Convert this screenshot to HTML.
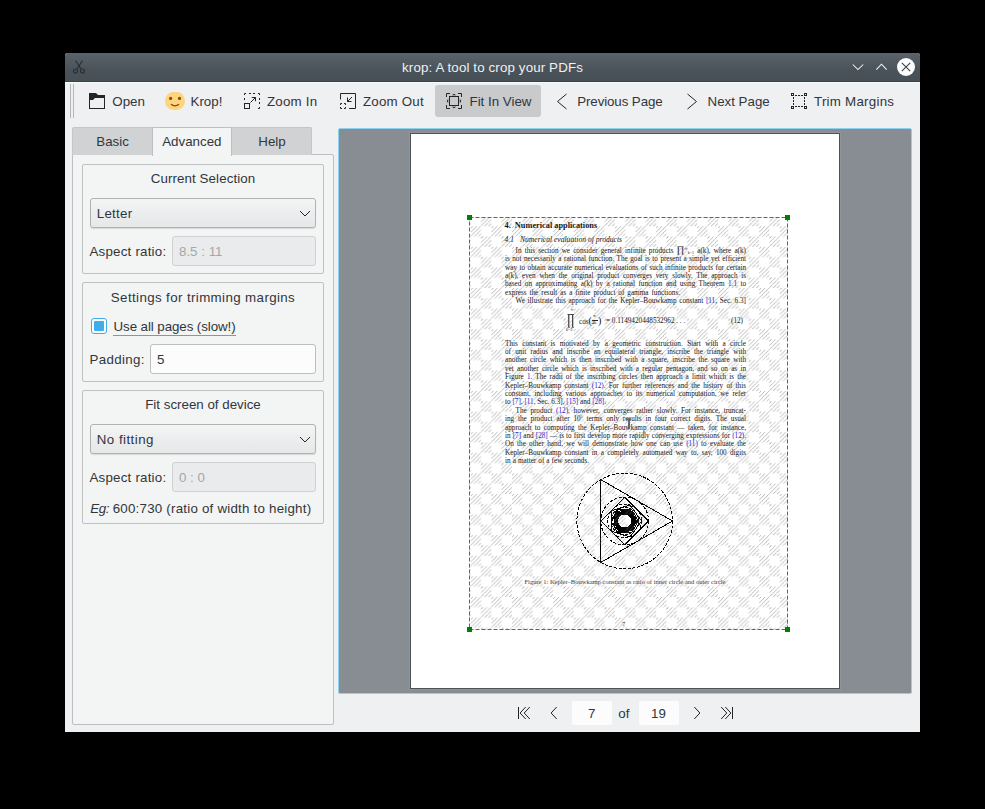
<!DOCTYPE html><html><head><meta charset="utf-8"><style>
*{margin:0;padding:0;box-sizing:border-box}
html,body{width:985px;height:809px;overflow:hidden;background:#000}
body{position:relative;font-family:"Liberation Sans", sans-serif}
.a{position:absolute}
.t{position:absolute;white-space:nowrap;font-family:"Liberation Sans", sans-serif}
.pl sup,.pl sub{line-height:0}
.pl{position:absolute;white-space:nowrap;font-family:"Liberation Serif", serif;color:#111;text-align:justify;text-align-last:justify}
svg{position:absolute;overflow:visible}
</style></head><body>
<div class="a" style="left:65px;top:53px;width:855px;height:679px;background:#eff0f1;border-radius:3px 3px 0 0"></div>
<div class="a" style="left:65px;top:53px;width:855px;height:29px;border-radius:3px 3px 0 0;background:linear-gradient(#5a636b,#4b535a 60%,#475057);border-bottom:1px solid #3b4249"></div>
<div class="a" style="left:65px;top:82px;width:855px;height:1px;background:#f8f9f9"></div>
<svg style="left:72px;top:59px" width="16" height="16" viewBox="0 0 16 16"><g fill="none" stroke="#2a2e32" stroke-width="1.1"><path d="M3.5 1.5 L9 10 M10.5 1.5 L5 10"/><circle cx="3.5" cy="12" r="2"/><circle cx="10.5" cy="12" r="2"/></g></svg>
<div class="t" style="left:292.5px;width:400px;text-align:center;top:59.98px;font-size:13.333px;line-height:16px;color:#eff0f1;letter-spacing:0.13px">krop: A tool to crop your PDFs</div>
<svg style="left:850px;top:60px" width="70" height="16" viewBox="0 0 70 16"><g fill="none" stroke="#f4f5f6" stroke-width="1.05"><path d="M2.8 4.5 L8 9.6 L13.2 4.5"/><path d="M26.3 9.6 L31.5 4.2 L36.7 9.6"/></g><circle cx="56" cy="7" r="9" fill="#fcfcfc"/><path d="M51.8 2.8 L60.2 11.2 M60.2 2.8 L51.8 11.2" stroke="#3c4349" stroke-width="1.1"/></svg>
<div class="a" style="left:70px;top:84px;width:1px;height:34px;background:#b4b6b8"></div>
<div class="a" style="left:73px;top:84px;width:1px;height:34px;background:#b4b6b8"></div>
<div class="a" style="left:435px;top:85px;width:106px;height:32px;background:#c9cacb;border-radius:3px"></div>
<svg style="left:89px;top:93px" width="16" height="16" viewBox="0 0 16 16"><path fill="#232629" fill-rule="evenodd" d="M0 0 H7 L9 2 H16 V16 H0 Z M1 7 H4 L6 5 H15 V15 H1 Z"/></svg>
<svg style="left:165px;top:92px" width="20" height="18" viewBox="0 0 20 18"><rect x="0" y="0" width="20" height="18" rx="8.5" ry="8.5" fill="#fdd57f"/><circle cx="5.6" cy="6.4" r="1.6" fill="#8b4a0c"/><circle cx="14.5" cy="6.4" r="1.6" fill="#8b4a0c"/><path d="M6 12.3 Q10 15.6 14 12.3" fill="none" stroke="#8b4a0c" stroke-width="1.3"/></svg>
<svg style="left:244px;top:93px" width="16" height="16" viewBox="0 0 16 16"><g fill="none" stroke="#232629" stroke-width="1"><rect x="0.5" y="10.5" width="5" height="5"/><path d="M0.5 2 V0.5 H2 M5 0.5 H7 M9 0.5 H11 M14 0.5 H15.5 V2 M0.5 5 V7 M15.5 5 V7 M15.5 9 V11 M15.5 14 V15.5 H14 M6.5 9.5 L11.5 4.5 M7.8 4.5 H11.5 V8.2"/></g></svg>
<svg style="left:340px;top:93px" width="16" height="16" viewBox="0 0 16 16"><g fill="none" stroke="#232629" stroke-width="1"><path d="M0.5 6.5 V0.5 H15.5 V15.5 H9"/><path d="M0.5 12 V10.5 H2 M4 10.5 H5.5 V12 M0.5 14 V15.5 H2 M4 15.5 H5.5 V14"/><path d="M12 4 L7.5 8.5 M7.5 4.5 V8.5 H11.5"/></g></svg>
<svg style="left:446px;top:93px" width="16" height="16" viewBox="0 0 16 16"><g fill="none" stroke="#232629" stroke-width="1"><path d="M0.5 4 V0.5 H4 M12 0.5 H15.5 V4 M0.5 12 V15.5 H4 M12 15.5 H15.5 V12"/><rect x="3.5" y="3.5" width="9" height="9"/></g><g fill="#232629"><path d="M5.8 2.2 L8 0.7 L10.2 2.2 Z M5.8 13.8 L8 15.3 L10.2 13.8 Z M2.2 5.8 L0.7 8 L2.2 10.2 Z M13.8 5.8 L15.3 8 L13.8 10.2 Z"/></g></svg>
<svg style="left:556px;top:93px" width="12" height="17" viewBox="0 0 12 17"><path d="M10.5 1 L1.5 8.5 L10.5 16" fill="none" stroke="#232629" stroke-width="1"/></svg>
<svg style="left:686px;top:93px" width="12" height="17" viewBox="0 0 12 17"><path d="M1.5 1 L10.5 8.5 L1.5 16" fill="none" stroke="#232629" stroke-width="1"/></svg>
<svg style="left:791px;top:93px" width="16" height="16" viewBox="0 0 16 16"><g fill="none" stroke="#232629" stroke-width="1"><rect x="0.5" y="0.5" width="2" height="2"/><rect x="13.5" y="0.5" width="2" height="2"/><rect x="0.5" y="13.5" width="2" height="2"/><rect x="13.5" y="13.5" width="2" height="2"/><path d="M4 2.5 H6 M7 2.5 H9 M10 2.5 H12 M4 13.5 H6 M7 13.5 H9 M10 13.5 H12 M2.5 4 V6 M2.5 7 V9 M2.5 10 V12 M13.5 4 V6 M13.5 7 V9 M13.5 10 V12"/></g></svg>
<div class="t" style="left:112.3px;top:93.68px;font-size:13.333px;line-height:16px;color:#31363b;">Open</div>
<div class="t" style="left:190.5px;top:93.68px;font-size:13.333px;line-height:16px;color:#31363b;">Krop!</div>
<div class="t" style="left:267px;top:93.68px;font-size:13.333px;line-height:16px;color:#31363b;letter-spacing:0.2px">Zoom In</div>
<div class="t" style="left:363px;top:93.68px;font-size:13.333px;line-height:16px;color:#31363b;letter-spacing:0.2px">Zoom Out</div>
<div class="t" style="left:469.5px;top:93.68px;font-size:13.333px;line-height:16px;color:#31363b;">Fit In View</div>
<div class="t" style="left:577.2px;top:93.68px;font-size:13.333px;line-height:16px;color:#31363b;letter-spacing:-0.1px">Previous Page</div>
<div class="t" style="left:707.5px;top:93.68px;font-size:13.333px;line-height:16px;color:#31363b;">Next Page</div>
<div class="t" style="left:814px;top:93.68px;font-size:13.333px;line-height:16px;color:#31363b;letter-spacing:0.25px">Trim Margins</div>
<div class="a" style="left:72px;top:154px;width:262px;height:571px;background:#f3f4f4;border:1px solid #bdbfc0;border-radius:0 2px 2px 2px"></div>
<div class="a" style="left:72px;top:127px;width:81px;height:28px;background:#d1d2d4;border:1px solid #c4c6c7;border-bottom:none;border-radius:2px 0 0 0"></div>
<div class="a" style="left:231px;top:127px;width:81px;height:28px;background:#d1d2d4;border:1px solid #c4c6c7;border-bottom:none;border-radius:0 2px 0 0"></div>
<div class="a" style="left:152px;top:127px;width:80px;height:29px;background:#f3f4f4;border:1px solid #bdbfc0;border-bottom:none;border-radius:2px 2px 0 0"></div>
<div class="t" style="left:96.3px;top:133.68px;font-size:13.333px;line-height:16px;color:#31363b;">Basic</div>
<div class="t" style="left:162.2px;top:133.68px;font-size:13.333px;line-height:16px;color:#31363b;">Advanced</div>
<div class="t" style="left:258.3px;top:133.68px;font-size:13.333px;line-height:16px;color:#31363b;">Help</div>
<div class="a" style="left:82px;top:164px;width:242px;height:110px;background:#f3f4f4;border:1px solid #bfc1c2;border-radius:2px"></div>
<div class="t" style="left:3px;width:400px;text-align:center;top:171.08px;font-size:13.333px;line-height:16px;color:#31363b;letter-spacing:0.1px">Current Selection</div>
<div class="a" style="left:90px;top:198px;width:226px;height:30px;background:linear-gradient(#f3f4f4,#e6e7e8);border:1px solid #b0b2b4;border-radius:3px;box-shadow:0 1px 1px rgba(0,0,0,0.12)"></div>
<svg style="left:299px;top:210px" width="12" height="7" viewBox="0 0 12 7"><path d="M1 1 L6 6 L11 1" fill="none" stroke="#232629" stroke-width="1"/></svg>
<div class="t" style="left:96.8px;top:205.98px;font-size:13.333px;line-height:16px;color:#31363b;letter-spacing:0.25px">Letter</div>
<div class="t" style="left:89.4px;top:244.48px;font-size:13.333px;line-height:16px;color:#31363b;letter-spacing:0.22px">Aspect ratio:</div>
<div class="a" style="left:172px;top:236px;width:144px;height:30px;background:#eaebec;border:1px solid #cfd1d2;border-radius:3px"></div>
<div class="t" style="left:179px;top:244.28px;font-size:13.333px;line-height:16px;color:#a5a7a9;">8.5 : 11</div>
<div class="a" style="left:82px;top:282px;width:242px;height:100px;background:#f3f4f4;border:1px solid #bfc1c2;border-radius:2px"></div>
<div class="t" style="left:3px;width:400px;text-align:center;top:289.58px;font-size:13.333px;line-height:16px;color:#31363b;letter-spacing:0.38px">Settings for trimming margins</div>
<div class="a" style="left:91px;top:318px;width:16px;height:16px;background:#fcfcfc;border:1px solid #3daee9;border-radius:3px"></div>
<div class="a" style="left:94px;top:321px;width:10px;height:10px;background:#3daee9;border-radius:1px"></div>
<div class="t" style="left:113.5px;top:318.78px;font-size:13.333px;line-height:16px;color:#31363b;letter-spacing:-0.08px">Use all pages (slow!)</div>
<div class="a" style="left:113px;top:335px;width:123px;height:1px;background:#3daee9"></div>
<div class="t" style="left:89.4px;top:351.78px;font-size:13.333px;line-height:16px;color:#31363b;letter-spacing:0.35px">Padding:</div>
<div class="a" style="left:150px;top:344px;width:166px;height:30px;background:#fcfcfc;border:1px solid #bcbec0;border-radius:3px"></div>
<div class="t" style="left:157px;top:352.28px;font-size:13.333px;line-height:16px;color:#31363b;">5</div>
<div class="a" style="left:82px;top:390px;width:242px;height:134px;background:#f3f4f4;border:1px solid #bfc1c2;border-radius:2px"></div>
<div class="t" style="left:3px;width:400px;text-align:center;top:396.68px;font-size:13.333px;line-height:16px;color:#31363b;">Fit screen of device</div>
<div class="a" style="left:90px;top:424px;width:226px;height:30px;background:linear-gradient(#f3f4f4,#e6e7e8);border:1px solid #b0b2b4;border-radius:3px;box-shadow:0 1px 1px rgba(0,0,0,0.12)"></div>
<svg style="left:299px;top:436px" width="12" height="7" viewBox="0 0 12 7"><path d="M1 1 L6 6 L11 1" fill="none" stroke="#232629" stroke-width="1"/></svg>
<div class="t" style="left:96.8px;top:431.98px;font-size:13.333px;line-height:16px;color:#31363b;letter-spacing:0.45px">No fitting</div>
<div class="t" style="left:89.4px;top:470.28px;font-size:13.333px;line-height:16px;color:#31363b;letter-spacing:0.22px">Aspect ratio:</div>
<div class="a" style="left:172px;top:462px;width:144px;height:30px;background:#eaebec;border:1px solid #cfd1d2;border-radius:3px"></div>
<div class="t" style="left:179px;top:470.28px;font-size:13.333px;line-height:16px;color:#a5a7a9;">0 : 0</div>
<div class="t" style="left:90.2px;top:501.18px;font-size:13.333px;line-height:16px;color:#31363b;"><i style="letter-spacing:-0.4px">Eg:</i> <span style="letter-spacing:0.22px">600:730 (ratio of width to height)</span></div>
<div class="a" style="left:338px;top:128px;width:574px;height:566px;background:#888c93;border:1px solid #8fd0ee;border-radius:2px"></div>
<div class="a" style="left:410px;top:133px;width:430px;height:556px;background:#fff;border:1px solid #4d5257;box-shadow:0 0 0 1px rgba(255,255,255,0.08)"></div>
<div class="pl" style="left:504.5px;top:221.45px;width:90px;font-size:8.3px;line-height:9.54px;"><b>4.&nbsp;&nbsp;Numerical applications</b></div>
<div class="pl" style="left:504.5px;top:236.28px;width:9px;font-size:7.6px;line-height:8.73px;"><i>4.1</i></div>
<div class="pl" style="left:520px;top:236.28px;width:102px;font-size:7.6px;line-height:8.73px;"><i>Numerical evaluation of products</i></div>
<div class="pl" style="left:515.5px;top:246.83px;width:230.5px;font-size:7.2px;line-height:8.27px;">In this section we consider general infinite products <span style='font-size:9.5px;line-height:0'>∏</span><span style='font-size:4.5px;line-height:0;position:relative;top:-3px'>∞</span><span style='font-size:4px;line-height:0;position:relative;top:1.5px'>k=1</span> a(k), where a(k)</div>
<div class="pl" style="left:505px;top:255.18px;width:241px;font-size:7.2px;line-height:8.27px;">is not necessarily a rational function. The goal is to present a simple yet efficient</div>
<div class="pl" style="left:505px;top:263.53px;width:241px;font-size:7.2px;line-height:8.27px;">way to obtain accurate numerical evaluations of such infinite products for certain</div>
<div class="pl" style="left:505px;top:271.88px;width:241px;font-size:7.2px;line-height:8.27px;">a(k), even when the original product converges very slowly. The approach is</div>
<div class="pl" style="left:505px;top:280.23px;width:241px;font-size:7.2px;line-height:8.27px;">based on approximating a(k) by a rational function and using Theorem <span style="color:#1a1acc">1.1</span> to</div>
<div class="pl" style="left:505px;top:288.58px;width:175px;font-size:7.2px;line-height:8.27px;">express the result as a finite product of gamma functions.</div>
<div class="pl" style="left:515.5px;top:296.93px;width:230.5px;font-size:7.2px;line-height:8.27px;">We illustrate this approach for the Kepler–Bouwkamp constant <span style="color:#1a1acc">[11</span>, Sec. 6.3]</div>
<svg style="left:566px;top:312px" width="20" height="20" viewBox="0 0 20 20"><g fill="#111"><path d="M1.5 2.2 H8 V2.9 H7.2 V15 H8 V15.6 H5.5 V15 H6.2 V2.9 H3.3 V15 H4.1 V15.6 H1.5 V15 H2.3 V2.9 H1.5 Z"/></g></svg>
<div class="pl" style="left:570px;top:308px;font-size:4px;line-height:4px;text-align:center;width:4px;text-align-last:center">∞</div>
<div class="pl" style="left:566px;top:327.5px;font-size:4px;line-height:4px;width:10px">k=3</div>
<div class="pl" style="left:579px;top:316.5px;font-size:7.2px;line-height:8px;text-align-last:auto">cos<span style="font-size:10px">(</span></div>
<div class="pl" style="left:593px;top:313px;font-size:5px;line-height:5px;text-align-last:auto">π</div>
<div class="a" style="left:591.5px;top:319.5px;width:6px;height:0.6px;background:#222"></div>
<div class="pl" style="left:591.5px;top:320px;font-size:5px;line-height:5px;text-align-last:auto">4k</div>
<div class="pl" style="left:598px;top:316.5px;font-size:10px;line-height:8px;text-align-last:auto">)</div>
<div class="pl" style="left:606px;top:316.73px;width:74px;font-size:7.2px;line-height:8.27px;">= 0.1149420448532962 . . .</div>
<div class="pl" style="left:731px;top:316.73px;width:15px;font-size:7.2px;line-height:8.27px;">(12)</div>
<div class="pl" style="left:505px;top:339.63px;width:241px;font-size:7.2px;line-height:8.27px;">This constant is motivated by a geometric construction. Start with a circle</div>
<div class="pl" style="left:505px;top:348.03px;width:241px;font-size:7.2px;line-height:8.27px;">of unit radius and inscribe an equilateral triangle, inscribe the triangle with</div>
<div class="pl" style="left:505px;top:356.43px;width:241px;font-size:7.2px;line-height:8.27px;">another circle which is then inscribed with a square, inscribe the square with</div>
<div class="pl" style="left:505px;top:364.83px;width:241px;font-size:7.2px;line-height:8.27px;">yet another circle which is inscribed with a regular pentagon, and so on as in</div>
<div class="pl" style="left:505px;top:373.23px;width:241px;font-size:7.2px;line-height:8.27px;">Figure <span style="color:#1a1acc">1</span>. The radii of the inscribing circles then approach a limit which is the</div>
<div class="pl" style="left:505px;top:381.63px;width:241px;font-size:7.2px;line-height:8.27px;">Kepler–Bouwkamp constant <span style="color:#1a1acc">(12)</span>. For further references and the history of this</div>
<div class="pl" style="left:505px;top:390.03px;width:241px;font-size:7.2px;line-height:8.27px;">constant, including various approaches to its numerical computation, we refer</div>
<div class="pl" style="left:505px;top:398.43px;width:101px;font-size:7.2px;line-height:8.27px;">to <span style="color:#1a1acc">[7]</span>, <span style="color:#1a1acc">[11</span>, Sec. 6.3], <span style="color:#1a1acc">[15]</span> and <span style="color:#1a1acc">[28]</span>.</div>
<div class="pl" style="left:515.5px;top:406.93px;width:230.5px;font-size:7.2px;line-height:8.27px;">The product <span style="color:#1a1acc">(12)</span>, however, converges rather slowly. For instance, truncat-</div>
<div class="pl" style="left:505px;top:415.30px;width:241px;font-size:7.2px;line-height:8.27px;">ing the product after 10<sup style='font-size:4px'>5</sup> terms only results in four correct digits. The usual</div>
<div class="pl" style="left:505px;top:423.67px;width:241px;font-size:7.2px;line-height:8.27px;">approach to computing the Kepler–Bouwkamp constant — taken, for instance,</div>
<div class="pl" style="left:505px;top:432.04px;width:241px;font-size:7.2px;line-height:8.27px;">in <span style="color:#1a1acc">[7]</span> and <span style="color:#1a1acc">[28]</span> — is to first develop more rapidly converging expressions for <span style="color:#1a1acc">(12)</span>.</div>
<div class="pl" style="left:505px;top:440.41px;width:241px;font-size:7.2px;line-height:8.27px;">On the other hand, we will demonstrate how one can use <span style="color:#1a1acc">(11)</span> to evaluate the</div>
<div class="pl" style="left:505px;top:448.78px;width:241px;font-size:7.2px;line-height:8.27px;">Kepler–Bouwkamp constant in a completely automated way to, say, 100 digits</div>
<div class="pl" style="left:505px;top:457.15px;width:84px;font-size:7.2px;line-height:8.27px;">in a matter of a few seconds.</div>
<svg style="left:0;top:0" width="985" height="809" viewBox="0 0 985 809"><g fill="none" stroke="#000" shape-rendering="crispEdges"><circle cx="624.7" cy="521.0" r="47.80" stroke-width="1" stroke-dasharray="3 1.6"/><polygon points="672.50,521.00 600.80,562.40 600.80,479.60" stroke-width="1"/><circle cx="624.7" cy="521.0" r="23.90" stroke-width="1" stroke-dasharray="3 1.6"/><polygon points="648.60,521.00 624.70,544.90 600.80,521.00 624.70,497.10" stroke-width="1"/><circle cx="624.7" cy="521.0" r="16.90" stroke-width="1" stroke-dasharray="3 1.6"/><polygon points="641.60,521.00 629.92,537.07 611.03,530.93 611.03,511.07 629.92,504.93" stroke-width="1"/><circle cx="624.7" cy="521.0" r="13.67" stroke-width="1" stroke-dasharray="3 1.6"/><polygon points="638.37,521.00 631.54,532.84 617.86,532.84 611.03,521.00 617.86,509.16 631.54,509.16" stroke-width="1"/><circle cx="624.7" cy="521.0" r="11.84" stroke-width="1" stroke-dasharray="3 1.6"/><polygon points="636.54,521.00 632.08,530.26 622.07,532.54 614.03,526.14 614.03,515.86 622.07,509.46 632.08,511.74" stroke-width="1"/><circle cx="624.7" cy="521.0" r="10.67" stroke-width="1" stroke-dasharray="3 1.6"/><polygon points="635.37,521.00 632.24,528.54 624.70,531.67 617.16,528.54 614.03,521.00 617.16,513.46 624.70,510.33 632.24,513.46" stroke-width="1"/><circle cx="624.7" cy="521.0" r="9.86" stroke-width="1" stroke-dasharray="3 1.6"/><polygon points="634.56,521.00 632.25,527.34 626.41,530.71 619.77,529.54 615.44,524.37 615.44,517.63 619.77,512.46 626.41,511.29 632.25,514.66" stroke-width="1"/><circle cx="624.7" cy="521.0" r="9.26" stroke-width="1" stroke-dasharray="3 1.6"/><polygon points="633.96,521.00 632.19,526.44 627.56,529.81 621.84,529.81 617.21,526.44 615.44,521.00 617.21,515.56 621.84,512.19 627.56,512.19 632.19,515.56" stroke-width="1"/><circle cx="624.7" cy="521.0" r="8.81" stroke-width="1" stroke-dasharray="3 1.6"/><polygon points="633.51,521.00 632.11,525.76 628.36,529.01 623.45,529.72 618.93,527.66 616.25,523.48 616.25,518.52 618.93,514.34 623.45,512.28 628.36,512.99 632.11,516.24" stroke-width="1"/><circle cx="624.7" cy="521.0" r="8.45" stroke-width="1" stroke-dasharray="3 1.6"/><polygon points="633.15,521.00 632.02,525.23 628.93,528.32 624.70,529.45 620.47,528.32 617.38,525.23 616.25,521.00 617.38,516.77 620.47,513.68 624.70,512.55 628.93,513.68 632.02,516.77" stroke-width="1"/><circle cx="624.7" cy="521.0" r="8.16" stroke-width="1" stroke-dasharray="3 1.6"/><polygon points="632.86,521.00 631.93,524.79 629.34,527.72 625.68,529.10 621.81,528.63 618.59,526.41 616.77,522.95 616.77,519.05 618.59,515.59 621.81,513.37 625.68,512.90 629.34,514.28 631.93,517.21" stroke-width="1"/><circle cx="624.7" cy="521.0" r="7.93" stroke-width="1" stroke-dasharray="3 1.6"/><polygon points="632.63,521.00 631.84,524.44 629.64,527.20 626.46,528.73 622.94,528.73 619.76,527.20 617.56,524.44 616.77,521.00 617.56,517.56 619.76,514.80 622.94,513.27 626.46,513.27 629.64,514.80 631.84,517.56" stroke-width="1"/><circle cx="624.7" cy="521.0" r="7.73" stroke-width="1" stroke-dasharray="3 1.6"/><polygon points="632.43,521.00 631.76,524.14 629.87,526.74 627.09,528.35 623.89,528.69 620.84,527.69 618.45,525.54 617.14,522.61 617.14,519.39 618.45,516.46 620.84,514.31 623.89,513.31 627.09,513.65 629.87,515.26 631.76,517.86" stroke-width="1"/><circle cx="624.7" cy="521.0" r="7.56" stroke-width="1" stroke-dasharray="3 1.6"/><polygon points="632.26,521.00 631.68,523.89 630.04,526.34 627.59,527.98 624.70,528.56 621.81,527.98 619.36,526.34 617.72,523.89 617.14,521.00 617.72,518.11 619.36,515.66 621.81,514.02 624.70,513.44 627.59,514.02 630.04,515.66 631.68,518.11" stroke-width="1"/><circle cx="624.7" cy="521.0" r="7.41" stroke-width="1" stroke-dasharray="3 1.6"/><polygon points="632.11,521.00 631.61,523.68 630.18,525.99 628.00,527.64 625.38,528.38 622.67,528.13 620.23,526.92 618.40,524.90 617.41,522.36 617.41,519.64 618.40,517.10 620.23,515.08 622.67,513.87 625.38,513.62 628.00,514.36 630.18,516.01 631.61,518.32" stroke-width="1"/><circle cx="624.7" cy="521.0" r="7.29" stroke-width="1" stroke-dasharray="3 1.6"/><polygon points="631.99,521.00 631.55,523.49 630.28,525.68 628.34,527.31 625.97,528.18 623.43,528.18 621.06,527.31 619.12,525.68 617.85,523.49 617.41,521.00 617.85,518.51 619.12,516.32 621.06,514.69 623.43,513.82 625.97,513.82 628.34,514.69 630.28,516.32 631.55,518.51" stroke-width="1"/><circle cx="624.7" cy="521.0" r="7.18" stroke-width="1" stroke-dasharray="3 1.6"/><polygon points="631.88,521.00 631.49,523.33 630.36,525.41 628.63,527.01 626.46,527.96 624.11,528.15 621.82,527.57 619.84,526.28 618.39,524.42 617.62,522.18 617.62,519.82 618.39,517.58 619.84,515.72 621.82,514.43 624.11,513.85 626.46,514.04 628.63,514.99 630.36,516.59 631.49,518.67" stroke-width="1"/><circle cx="624.7" cy="521.0" r="7.08" stroke-width="1" stroke-dasharray="3 1.6"/><polygon points="631.78,521.00 631.43,523.19 630.43,525.16 628.86,526.73 626.89,527.73 624.70,528.08 622.51,527.73 620.54,526.73 618.97,525.16 617.97,523.19 617.62,521.00 617.97,518.81 618.97,516.84 620.54,515.27 622.51,514.27 624.70,513.92 626.89,514.27 628.86,515.27 630.43,516.84 631.43,518.81" stroke-width="1"/><circle cx="624.7" cy="521.0" r="6.99" stroke-width="1"/></g></svg>
<div class="pl" style="left:524.5px;top:578.06px;width:201px;font-size:6.5px;line-height:7.47px;color:#3a3a3a">Figure 1: Kepler–Bouwkamp constant as ratio of inner circle and outer circle</div>
<div class="pl" style="left:622px;top:619.97px;width:4px;font-size:6.6px;line-height:7.58px;color:#333">7</div>
<svg style="left:469px;top:217px" width="319" height="413" viewBox="0 0 319 413">
<defs><clipPath id="cc"><rect x="0" y="0" width="10.3" height="10.3"/><rect x="10.3" y="10.3" width="10.3" height="10.3"/></clipPath>
<pattern id="h" patternUnits="userSpaceOnUse" width="20.6" height="20.6" x="1.75" y="9.2">
<g clip-path="url(#cc)" stroke="#7e7e7e" stroke-width="0.9" fill="none" stroke-dasharray="0.9 0.514"><path d="M-10.00 12.00 L3.00 -1.00"/><path d="M-6.00 12.00 L7.00 -1.00"/><path d="M-2.00 12.00 L11.00 -1.00"/><path d="M2.00 12.00 L15.00 -1.00"/><path d="M6.00 12.00 L19.00 -1.00"/><path d="M10.00 12.00 L23.00 -1.00"/><path d="M0.30 22.30 L13.30 9.30"/><path d="M4.30 22.30 L17.30 9.30"/><path d="M8.30 22.30 L21.30 9.30"/><path d="M12.30 22.30 L25.30 9.30"/><path d="M16.30 22.30 L29.30 9.30"/><path d="M20.30 22.30 L33.30 9.30"/></g></pattern></defs>
<rect x="0" y="0" width="319" height="413" fill="url(#h)"/>
<rect x="0.5" y="0.5" width="318" height="412" fill="none" stroke="#636363" stroke-width="1" stroke-dasharray="4 2"/>
</svg>
<div class="a" style="left:467px;top:215px;width:5px;height:5px;background:#008000"></div>
<div class="a" style="left:785px;top:215px;width:5px;height:5px;background:#008000"></div>
<div class="a" style="left:467px;top:627px;width:5px;height:5px;background:#008000"></div>
<div class="a" style="left:785px;top:627px;width:5px;height:5px;background:#008000"></div>
<div class="a" style="left:626px;top:418px;width:5px;height:2px;background:#707070"></div>
<div class="a" style="left:628px;top:419px;width:2px;height:10px;background:#666"></div>
<svg style="left:515px;top:705px" width="50" height="16" viewBox="0 0 50 16"><g fill="none" stroke="#232629" stroke-width="1"><path d="M3.5 2 V14 M10.7 2 L5.1 8 L10.7 14 M14.8 2 L9.2 8 L14.8 14 M41.7 2 L36.1 8 L41.7 14"/></g></svg>
<div class="a" style="left:572px;top:701px;width:40px;height:24px;background:#fcfcfc;border-radius:2px"></div>
<div class="a" style="left:639px;top:701px;width:40px;height:24px;background:#fcfcfc;border-radius:2px"></div>
<div class="t" style="left:391.79999999999995px;width:400px;text-align:center;top:706.18px;font-size:13.333px;line-height:16px;color:#31363b;">7</div>
<div class="t" style="left:618.3px;top:706.18px;font-size:13.333px;line-height:16px;color:#31363b;">of</div>
<div class="t" style="left:458.5px;width:400px;text-align:center;top:706.18px;font-size:13.333px;line-height:16px;color:#31363b;">19</div>
<svg style="left:690px;top:705px" width="50" height="16" viewBox="0 0 50 16"><g fill="none" stroke="#232629" stroke-width="1"><path d="M4.3 2 L9.9 8 L4.3 14 M31.2 2 L36.8 8 L31.2 14 M35.3 2 L40.9 8 L35.3 14 M42.5 2 V14"/></g></svg>
</body></html>
